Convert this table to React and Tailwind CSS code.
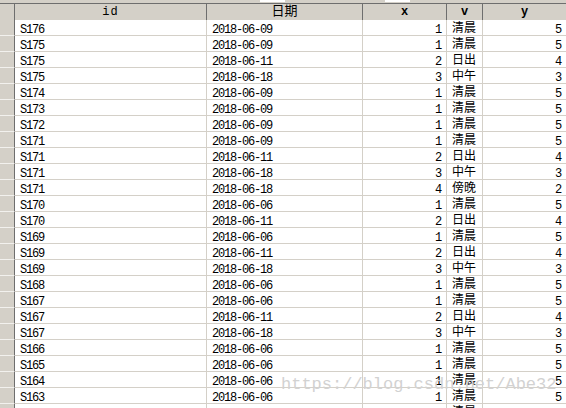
const rows = [
  ["S176", "2018-06-09", 1, "清晨", 5],
  ["S175", "2018-06-09", 1, "清晨", 5],
  ["S175", "2018-06-11", 2, "日出", 4],
  ["S175", "2018-06-18", 3, "中午", 3],
  ["S174", "2018-06-09", 1, "清晨", 5],
  ["S173", "2018-06-09", 1, "清晨", 5],
  ["S172", "2018-06-09", 1, "清晨", 5],
  ["S171", "2018-06-09", 1, "清晨", 5],
  ["S171", "2018-06-11", 2, "日出", 4],
  ["S171", "2018-06-18", 3, "中午", 3],
  ["S171", "2018-06-18", 4, "傍晚", 2],
  ["S170", "2018-06-06", 1, "清晨", 5],
  ["S170", "2018-06-11", 2, "日出", 4],
  ["S169", "2018-06-06", 1, "清晨", 5],
  ["S169", "2018-06-11", 2, "日出", 4],
  ["S169", "2018-06-18", 3, "中午", 3],
  ["S168", "2018-06-06", 1, "清晨", 5],
  ["S167", "2018-06-06", 1, "清晨", 5],
  ["S167", "2018-06-11", 2, "日出", 4],
  ["S167", "2018-06-18", 3, "中午", 3],
  ["S166", "2018-06-06", 1, "清晨", 5],
  ["S165", "2018-06-06", 1, "清晨", 5],
  ["S164", "2018-06-06", 1, "清晨", 5],
  ["S163", "2018-06-06", 1, "清晨", 5],
  ["S162", "2018-06-06", 1, "清晨", 5],
];

const mono = "font-['Liberation_Mono','Noto_Sans_CJK_SC',monospace]";

export default function App() {
  return (
    <div className={`relative w-[566px] h-[408px] overflow-hidden bg-white text-black ${mono}`}>
      {/* top strip */}
      <div className="flex h-[3px] bg-[#d4d0c8]">
        <div className="ml-[260px] w-[25px] h-[2px] bg-white" />
        <div className="ml-[100px] w-[25px] h-[2px] bg-white" />
      </div>
      {/* header */}
      <div className="flex h-[17px] border-t border-[#6e6e6e] bg-[#d4d0c8] text-[12px] leading-[15px]">
        <div className="w-[15px] shrink-0 border-r border-[#6e6e6e]" />
        <div className="w-[192px] shrink-0 border-r border-[#6e6e6e] text-center tracking-[1px] pt-[1px]">id</div>
        <div className="w-[156px] shrink-0 border-r border-[#6e6e6e] text-center text-[13px] pt-[0px]">日期</div>
        <div className="w-[84px] shrink-0 border-r border-[#6e6e6e] text-center font-bold pt-[1px]">x</div>
        <div className="w-[36px] shrink-0 border-r border-[#6e6e6e] text-center font-bold pt-[1px]">v</div>
        <div className="flex-1 text-center font-bold pt-[1px]">y</div>
      </div>
      {/* rows */}
      {rows.map((r, i) => (
        <div key={i} className="flex h-[16px] overflow-hidden text-[12px] leading-[12px] tracking-[-1.2px]">
          <div className="w-[15px] shrink-0 bg-[#d4d0c8] border-r border-[#6e6e6e] border-b border-b-[#f2f1ee]" />
          <div className="w-[192px] shrink-0 border-r border-b border-[#d4d0c8] pl-[5px] pt-[4px]">{r[0]}</div>
          <div className="w-[156px] shrink-0 border-r border-b border-[#d4d0c8] pl-[5px] pt-[4px]">{r[1]}</div>
          <div className="w-[84px] shrink-0 border-r border-b border-[#d4d0c8] text-right pr-[5px] pt-[4px]">{r[2]}</div>
          <div className="w-[36px] shrink-0 border-r border-b border-[#d4d0c8] pl-[5px] pt-[3px] tracking-normal">{r[3]}</div>
          <div className="flex-1 border-b border-[#d4d0c8] text-right pr-[5px] pt-[4px]">{r[4]}</div>
        </div>
      ))}
      {/* watermark */}
      <div className="absolute left-[281px] top-[373px] text-[17px] leading-[24px] text-[#d2d2d2] whitespace-nowrap font-['Liberation_Mono',monospace] tracking-normal">
        https://blog.csdn.net/Abe32
      </div>
    </div>
  );
}
